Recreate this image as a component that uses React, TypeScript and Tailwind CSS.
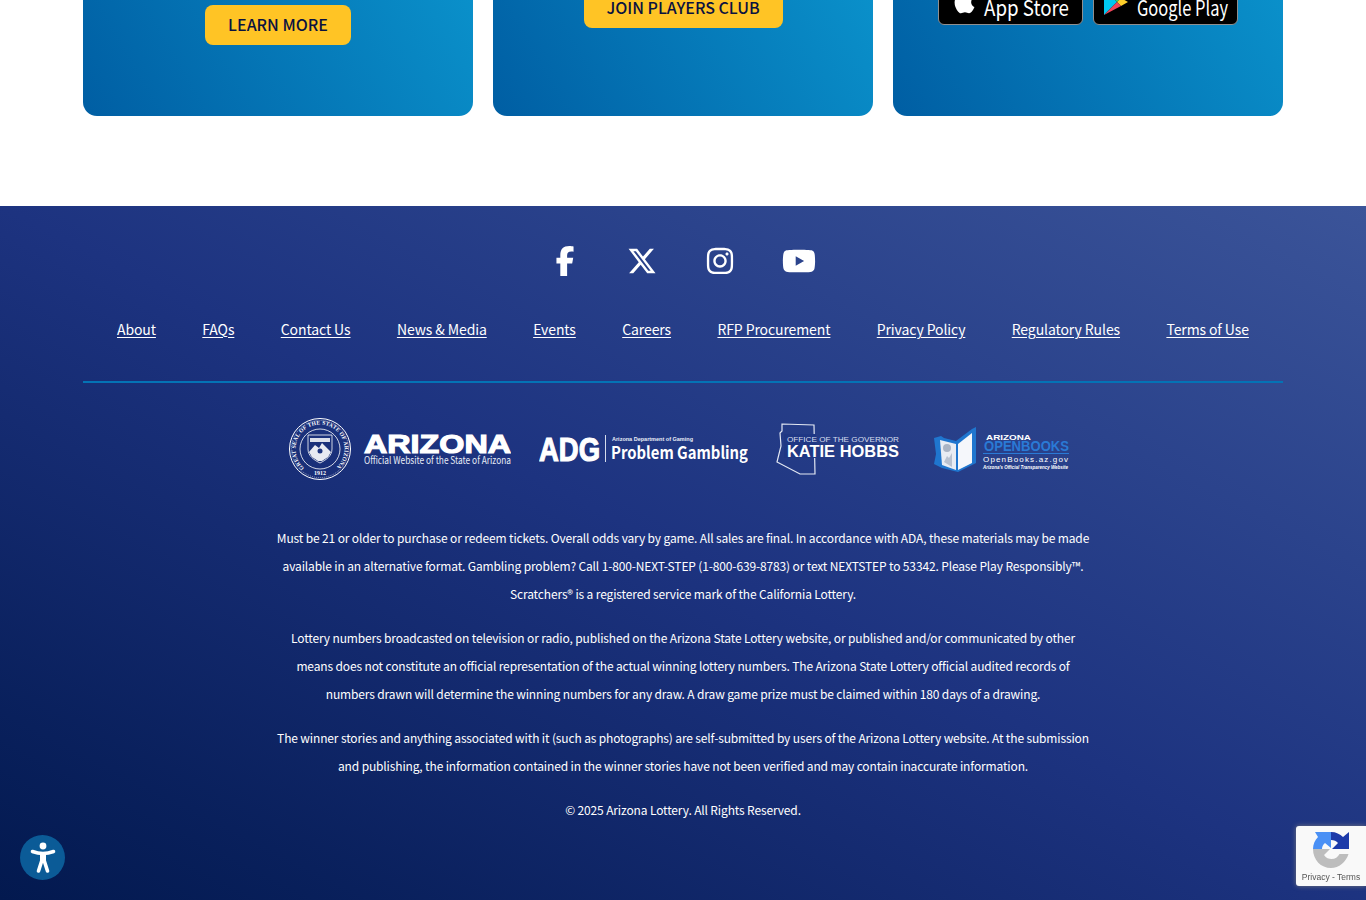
import { FaFacebookF, FaXTwitter, FaInstagram, FaYoutube, FaApple } from "react-icons/fa6";

const links = ["About", "FAQs", "Contact Us", "News & Media", "Events", "Careers", "RFP Procurement", "Privacy Policy", "Regulatory Rules", "Terms of Use"];

function SealLogo() {
  return (
    <svg width="222" height="62" viewBox="0 0 222 62" className="shrink-0">
      <defs>
        <path id="sealArc" d="M 15.25 49.77 A 24.5 24.5 0 1 1 46.75 49.77" />
      </defs>
      <circle cx="31" cy="31" r="30.5" fill="none" stroke="#fff" strokeWidth="1" />
      <circle cx="31" cy="31" r="28.6" fill="none" stroke="#fff" strokeWidth="0.5" strokeDasharray="1 1" />
      <circle cx="31" cy="31" r="20" fill="none" stroke="#fff" strokeWidth="0.8" />
      <text fontFamily="'Liberation Serif',serif" fontSize="5.6" fontWeight="700" fill="#fff">
        <textPath href="#sealArc" textLength="118" lengthAdjust="spacing">GREAT SEAL OF THE STATE OF ARIZONA</textPath>
      </text>
      <text x="31" y="57" textAnchor="middle" fontFamily="'Liberation Serif',serif" fontSize="6" fontWeight="700" fill="#fff">1912</text>
      <path d="M19 17h24v14c0 7-6 11-12 14-6-3-12-7-12-14z" fill="none" stroke="#fff" strokeWidth="0.8" />
      <path d="M21 20h20v4H21z" fill="#fff" opacity="0.85" />
      <path d="M20 34l6-7 4 3 3-5 9 9-3 5-6 4h-4l-6-4z" fill="#fff" opacity="0.9" />
      <circle cx="31" cy="33" r="2.5" fill="#1d3480" />
      <text x="75" y="35" fontFamily="'Liberation Sans',sans-serif" fontSize="25" fontWeight="700" fill="#fff" stroke="#fff" strokeWidth="1.1" textLength="147" lengthAdjust="spacingAndGlyphs">ARIZONA</text>
      <text x="75" y="46" fontFamily="'Noto Sans CJK JP',sans-serif" fontSize="10" fill="#e6ebf5" textLength="147" lengthAdjust="spacingAndGlyphs">Official Website of the State of Arizona</text>
    </svg>
  );
}

function AdgLogo() {
  return (
    <svg width="209" height="62" viewBox="0 0 209 62" className="shrink-0">
      <text x="0" y="43" fontFamily="'Liberation Sans',sans-serif" fontSize="34" fontWeight="700" fill="#fff" stroke="#fff" strokeWidth="1.2" textLength="61" lengthAdjust="spacingAndGlyphs">ADG</text>
      <rect x="66" y="17" width="1" height="27" fill="#d5dcec" />
      <text x="73" y="23" fontFamily="'Liberation Sans',sans-serif" fontSize="5.2" fontWeight="700" fill="#e9edf6" textLength="81" lengthAdjust="spacingAndGlyphs">Arizona Department of Gaming</text>
      <text x="72" y="41" fontFamily="'Noto Sans CJK JP',sans-serif" fontSize="17" fontWeight="700" fill="#fff" textLength="137" lengthAdjust="spacingAndGlyphs">Problem Gambling</text>
    </svg>
  );
}

function GovernorLogo() {
  return (
    <svg width="123" height="62" viewBox="0 0 123 62" className="shrink-0">
      <path d="M6 6 L38 7 L39 56 L24 56 L1 44 L5 28 L4 15 L6 13 Z" fill="none" stroke="#e3e8f3" strokeWidth="1.2" />
      <rect x="8" y="16" width="32" height="24" fill="#1f3784" />
      <text x="11" y="24" fontFamily="'Liberation Sans',sans-serif" fontSize="8" fill="#d8dfee" textLength="112" lengthAdjust="spacingAndGlyphs">OFFICE OF THE GOVERNOR</text>
      <text x="11" y="38.5" fontFamily="'Liberation Sans',sans-serif" fontSize="16.5" fontWeight="700" fill="#fff" textLength="112" lengthAdjust="spacingAndGlyphs">KATIE HOBBS</text>
    </svg>
  );
}

function OpenBooksLogo() {
  return (
    <svg width="135" height="62" viewBox="0 0 135 62" className="shrink-0">
      <path d="M0 20l7-2 3 2 12 3 16-12 4-2v36L24 54 8 50 0 46 2 36z" fill="#1f76cf" />
      <path d="M6 22l16 4v26L8 47z" fill="#e8ecf3" />
      <path d="M24 26l14-11v30L24 52z" fill="#f5f7fb" />
      <circle cx="13" cy="30" r="4" fill="#aab4c4" />
      <path d="M10 44l3-6 2 2 3-5v14z" fill="#b9c2d0" />
      <text x="52" y="22" fontFamily="'Liberation Sans',sans-serif" fontSize="8" fontWeight="700" fill="#fff" textLength="45" lengthAdjust="spacingAndGlyphs">ARIZONA</text>
      <text x="50" y="33" fontFamily="'Liberation Sans',sans-serif" fontSize="14" fontWeight="700" fill="#2a7ad6" textLength="85" lengthAdjust="spacingAndGlyphs">OPENBOOKS</text>
      <rect x="49" y="35" width="86" height="1" fill="#2a7ad6" />
      <text x="49" y="44" fontFamily="'Liberation Sans',sans-serif" fontSize="8" fill="#fff" textLength="85" lengthAdjust="spacing">OpenBooks.az.gov</text>
      <text x="49" y="51" fontFamily="'Liberation Sans',sans-serif" fontSize="5" fontWeight="700" fontStyle="italic" fill="#fff" textLength="85" lengthAdjust="spacingAndGlyphs">Arizona's Official Transparency Website</text>
    </svg>
  );
}

const cardClass = "h-[116px] rounded-b-[14px] bg-[linear-gradient(60deg,#005ea3,#0a90ca)] flex justify-center";
const buttonClass = "h-[40px] pb-[2px] rounded-[8px] bg-[#ffc425] text-[#0b1240] text-[16px] font-medium flex items-center justify-center";

export default function App() {
  return (
    <div className="h-[900px] overflow-hidden bg-white font-['Noto_Sans_CJK_JP','Noto_Sans',sans-serif]">
      <section className="h-[206px]">
        <div className="mx-auto w-[1200px] flex gap-5">
          <div className={`w-[390px] ${cardClass}`}>
            <a className={`mt-[5px] w-[146px] ${buttonClass}`}>LEARN MORE</a>
          </div>
          <div className={`w-[380px] ${cardClass}`}>
            <a className={`-mt-[12px] w-[199px] ${buttonClass}`}>JOIN PLAYERS CLUB</a>
          </div>
          <div className={`w-[390px] ${cardClass} gap-[10px]`}>
            <div className="w-[145px] h-[48px] -mt-[23px] bg-black border border-[#8f8f8f] rounded-[6px] relative overflow-hidden">
              <FaApple className="absolute left-[12px] top-[10px] text-white text-[27px]" />
              <svg width="143" height="46" viewBox="0 0 143 46" className="absolute left-0 top-0">
                <text x="45" y="38" fontFamily="'Noto Sans CJK JP',sans-serif" fontSize="22" fill="#fff" textLength="85" lengthAdjust="spacingAndGlyphs">App Store</text>
              </svg>
            </div>
            <div className="w-[145px] h-[48px] -mt-[23px] bg-black border border-[#8f8f8f] rounded-[6px] relative overflow-hidden">
              <svg width="143" height="46" viewBox="0 0 143 46" className="absolute left-0 top-0">
                <path d="M10 11l13 13-13 13z" fill="#00c8f0" />
                <path d="M10 11l17 9-4 4z" fill="#2fd07b" />
                <path d="M27 20l7 4-7 4-4-4z" fill="#ffcf2b" />
                <path d="M10 37l17-9-4-4z" fill="#f0455a" />
                <text x="43" y="38" fontFamily="'Noto Sans CJK JP',sans-serif" fontSize="21" fill="#fff" textLength="91" lengthAdjust="spacingAndGlyphs">Google Play</text>
              </svg>
            </div>
          </div>
        </div>
      </section>

      <footer className="h-[694px] bg-gradient-to-tr from-[#03194f] via-[#1d3380] to-[#3b5499] text-white">
        <div className="mx-auto w-[1200px] border-b-2 border-[#0473b5] h-[177px]">
          <div className="flex justify-center items-center gap-[47.5px] pt-[40px] h-[70px]">
            <FaFacebookF size={30} />
            <FaXTwitter size={30} />
            <FaInstagram size={30} />
            <FaYoutube size={34} />
          </div>
          <nav className="flex justify-between px-[34px] mt-[42px] text-[14px] tracking-[-0.1px] leading-[22px]">
            {links.map((l) => (
              <a key={l} className="underline underline-offset-2">{l}</a>
            ))}
          </nav>
        </div>

        <div className="flex justify-center mt-[35px] gap-[28px] pr-[8px]">
          <SealLogo />
          <AdgLogo />
          <GovernorLogo />
          <div className="ml-[7px]"><OpenBooksLogo /></div>
        </div>

        <div className="mx-auto w-[840px] mt-[44px] text-center text-[12px] tracking-[-0.14px] leading-[28px] flex flex-col gap-4">
          <p>Must be 21 or older to purchase or redeem tickets. Overall odds vary by game. All sales are final. In accordance with ADA, these materials may be made<br />available in an alternative format. Gambling problem? Call 1-800-NEXT-STEP (1-800-639-8783) or text NEXTSTEP to 53342. Please Play Responsibly™.<br />Scratchers® is a registered service mark of the California Lottery.</p>
          <p>Lottery numbers broadcasted on television or radio, published on the Arizona State Lottery website, or published and/or communicated by other<br />means does not constitute an official representation of the actual winning lottery numbers. The Arizona State Lottery official audited records of<br />numbers drawn will determine the winning numbers for any draw. A draw game prize must be claimed within 180 days of a drawing.</p>
          <p>The winner stories and anything associated with it (such as photographs) are self-submitted by users of the Arizona Lottery website. At the submission<br />and publishing, the information contained in the winner stories have not been verified and may contain inaccurate information.</p>
          <p>© 2025 Arizona Lottery. All Rights Reserved.</p>
        </div>
      </footer>

      <button className="fixed left-[20px] top-[835px] w-[45px] h-[45px] rounded-full bg-[#0b5b97] flex items-center justify-center">
        <svg width="26" height="32" viewBox="0 0 26 32">
          <circle cx="13" cy="4" r="3.4" fill="#fff" />
          <path d="M2.5 9.5c4 1.5 7 2 10.5 2s6.5-.5 10.5-2" fill="none" stroke="#fff" strokeWidth="3.6" strokeLinecap="round" />
          <path d="M13 11v7" fill="none" stroke="#fff" strokeWidth="6" />
          <path d="M12 18l-3.5 11M14 18l3.5 11" fill="none" stroke="#fff" strokeWidth="3.6" strokeLinecap="round" />
        </svg>
      </button>

      <div className="fixed left-[1296px] top-[826px] w-[70px] h-[60px] bg-[#f9f9f9] rounded-l-[3px] shadow-[0_0_5px_rgba(128,128,128,0.9)] flex flex-col items-center">
        <svg width="38" height="38" viewBox="0 0 38 38" className="mt-[5px] -ml-[1px] shrink-0">
          <path d="M1 18 H10 C10 15.5 11 13.5 13 12 L19 17 V1 H3 L6 6 C3 9 1 13 1 18Z" fill="#4a90f5" />
          <path d="M19 1 C24 1 28 3 31 6 L37 1 V18 H20 L26 12 C24.5 10 22 9 19 9Z" fill="#1c3aa9" />
          <path d="M1 18 H18 L12 24 C14 27 17 28 19.5 28 C23 28 26 26 27.5 23 H36.5 C34 31 27 37 19 37 C9 37 1 29 1 18Z" fill="#bdbdbd" />
        </svg>
        <span className="font-['Liberation_Sans',sans-serif] text-[8.5px] leading-[10px] text-[#555] mt-[3px] whitespace-nowrap">Privacy - Terms</span>
      </div>
    </div>
  );
}
